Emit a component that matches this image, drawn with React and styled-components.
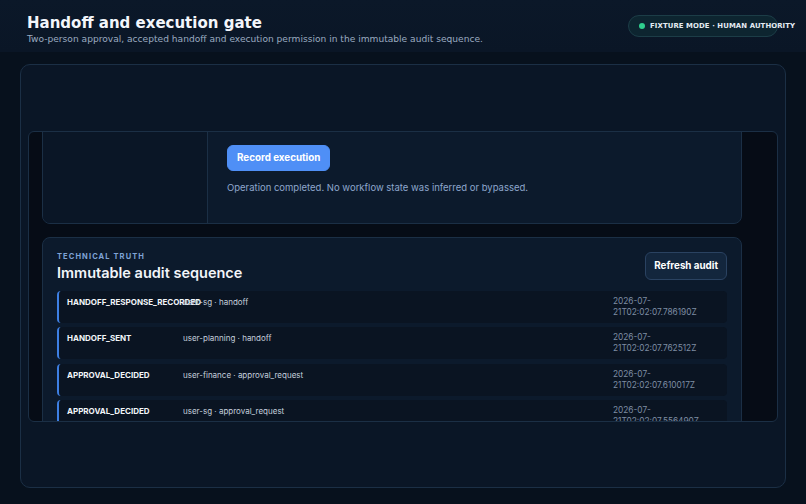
import React, { useLayoutEffect, useRef } from "react";
import styled, { createGlobalStyle } from "styled-components";

const GlobalStyle = createGlobalStyle`
  html, body {
    margin: 0;
    padding: 0;
    background: #07111d;
  }
  * {
    box-sizing: border-box;
  }
`;

const Page = styled.div`
  width: 806px;
  height: 504px;
  overflow: hidden;
  background: #07111d;
  font-family: Inter, "Liberation Sans", sans-serif;
  color: #e8eef7;
`;

const Header = styled.header`
  height: 52px;
  padding: 14px 28px 0 27px;
  display: flex;
  justify-content: space-between;
  align-items: flex-start;
  background: linear-gradient(180deg, #0b1829 0%, #0a1626 100%);
`;

const TitleBlock = styled.div`
  font-family: "DejaVu Sans", sans-serif;
`;

const Title = styled.h1`
  margin: 0;
  font-size: 15px;
  line-height: 19px;
  font-weight: 700;
  color: #f3f6fb;
`;

const Subtitle = styled.p`
  margin: 0;
  font-size: 9.1px;
  line-height: 12px;
  color: #9aabc0;
`;

const Pill = styled.div`
  width: 150px;
  height: 22px;
  margin-top: 1px;
  padding: 0 0 0 10px;
  display: flex;
  align-items: center;
  gap: 5px;
  border-radius: 11px;
  border: 1px solid #1c3d47;
  background: #0d2530;
  white-space: nowrap;
  font-family: "DejaVu Sans", sans-serif;
  font-size: 6.9px;
  font-weight: 700;
  letter-spacing: 0.1px;
  color: #e4ecf3;
`;

const Dot = styled.span`
  width: 6px;
  height: 6px;
  border-radius: 50%;
  background: #2fcf8e;
  flex-shrink: 0;
`;

const Main = styled.main`
  padding: 12px 20px 16px;
`;

const Shell = styled.section`
  height: 424px;
  padding: 0 7px;
  display: flex;
  align-items: center;
  border: 1px solid #1b2f45;
  border-radius: 10px;
  background: #0a1626;
`;

const Viewport = styled.div`
  width: 100%;
  height: 291px;
  overflow: hidden;
  border: 1px solid #1b2f45;
  border-radius: 6px;
  background: #060c16;
`;

const Stack = styled.div`
  padding: 14px 35px 14px 13px;
  display: flex;
  flex-direction: column;
  gap: 13px;
`;

const Card = styled.div`
  border: 1px solid #1b2f45;
  border-radius: 8px;
  background: #0c1a2c;
  overflow: hidden;
`;

const SplitCard = styled(Card)`
  display: grid;
  grid-template-columns: 165px 1fr;
`;

const SideColumn = styled.div`
  border-right: 1px solid #1b2f45;
  background: #0a1626;
`;

const ActionColumn = styled.div`
  padding: 18px 19px 28px;
`;

const Eyebrow = styled.div`
  font-size: 7.5px;
  line-height: 10px;
  font-weight: 700;
  letter-spacing: 1.1px;
  text-transform: uppercase;
  color: #7fa3d6;
`;

const CardTitle = styled.h2`
  margin: 1px 0 0;
  font-size: 14.5px;
  line-height: 20px;
  font-weight: 600;
  color: #f2f5fa;
`;

const ActionIntro = styled.div`
  height: 24px;
  margin-bottom: 18px;
`;

const Button = styled.button`
  height: 26px;
  padding: 0 9px;
  border-radius: 6px;
  border: 1px solid ${(p) => (p.$primary ? "#4f8ff6" : "#2a4261")};
  background: ${(p) => (p.$primary ? "#4f8ff6" : "#13263d")};
  color: #ffffff;
  font-family: Inter, "Liberation Sans", sans-serif;
  font-size: 9.8px;
  font-weight: 700;
  cursor: pointer;
`;

const Note = styled.p`
  margin: 10px 0 0;
  font-size: 9.5px;
  line-height: 14px;
  color: #8ea7cc;
`;

const AuditCard = styled(Card)`
  padding: 14px 14px 16px 14px;
`;

const AuditHead = styled.div`
  display: flex;
  justify-content: space-between;
  align-items: flex-start;
  margin-bottom: 8px;
`;

const RefreshButton = styled(Button)`
  height: 28px;
  padding: 0 8px;
`;

const Rows = styled.div`
  display: flex;
  flex-direction: column;
  gap: 4.5px;
`;

const Row = styled.div`
  display: grid;
  grid-template-columns: 116px 1fr 100px;
  min-height: 32px;
  padding: 5px 14px 4px 8px;
  border-left: 2px solid #3d7fe3;
  border-radius: 4px;
  background: #0a1422;
  font-size: 8px;
  line-height: 11px;
`;

const EventName = styled.div`
  padding-top: 1px;
  font-weight: 700;
  color: #f3f6fa;
  white-space: nowrap;
`;

const Actor = styled.div`
  padding-top: 1px;
  color: #c4cfdc;
`;

const Stamp = styled.div`
  font-size: 8.3px;
  color: #7e8da2;
`;

const events = [
  { type: "HANDOFF_RESPONSE_RECORDED", actor: "user-sg · handoff", at: "2026-07-21T02:02:07.786190Z" },
  { type: "HANDOFF_SENT", actor: "user-planning · handoff", at: "2026-07-21T02:02:07.762512Z" },
  { type: "APPROVAL_DECIDED", actor: "user-finance · approval_request", at: "2026-07-21T02:02:07.610017Z" },
  { type: "APPROVAL_DECIDED", actor: "user-sg · approval_request", at: "2026-07-21T02:02:07.556490Z" },
  { type: "APPROVAL_REQUESTED", actor: "user-planning · approval_request", at: "2026-07-21T02:02:07.501284Z" },
];

export default function App() {
  const viewportRef = useRef(null);

  useLayoutEffect(() => {
    if (viewportRef.current) viewportRef.current.scrollTop = 62;
  }, []);

  return (
    <>
      <GlobalStyle />
      <Page>
        <Header>
          <TitleBlock>
            <Title>Handoff and execution gate</Title>
            <Subtitle>
              Two-person approval, accepted handoff and execution permission in the immutable audit sequence.
            </Subtitle>
          </TitleBlock>
          <Pill>
            <Dot />
            FIXTURE MODE · HUMAN AUTHORITY
          </Pill>
        </Header>
        <Main>
          <Shell>
            <Viewport ref={viewportRef}>
              <Stack>
                <SplitCard>
                  <SideColumn />
                  <ActionColumn>
                    <ActionIntro>
                      <Eyebrow>Execution permission</Eyebrow>
                    </ActionIntro>
                    <Button $primary>Record execution</Button>
                    <Note>Operation completed. No workflow state was inferred or bypassed.</Note>
                  </ActionColumn>
                </SplitCard>
                <AuditCard>
                  <AuditHead>
                    <div>
                      <Eyebrow>Technical truth</Eyebrow>
                      <CardTitle>Immutable audit sequence</CardTitle>
                    </div>
                    <RefreshButton>Refresh audit</RefreshButton>
                  </AuditHead>
                  <Rows>
                    {events.map((e, i) => (
                      <Row key={i}>
                        <EventName>{e.type}</EventName>
                        <Actor>{e.actor}</Actor>
                        <Stamp>{e.at}</Stamp>
                      </Row>
                    ))}
                  </Rows>
                </AuditCard>
              </Stack>
            </Viewport>
          </Shell>
        </Main>
      </Page>
    </>
  );
}
